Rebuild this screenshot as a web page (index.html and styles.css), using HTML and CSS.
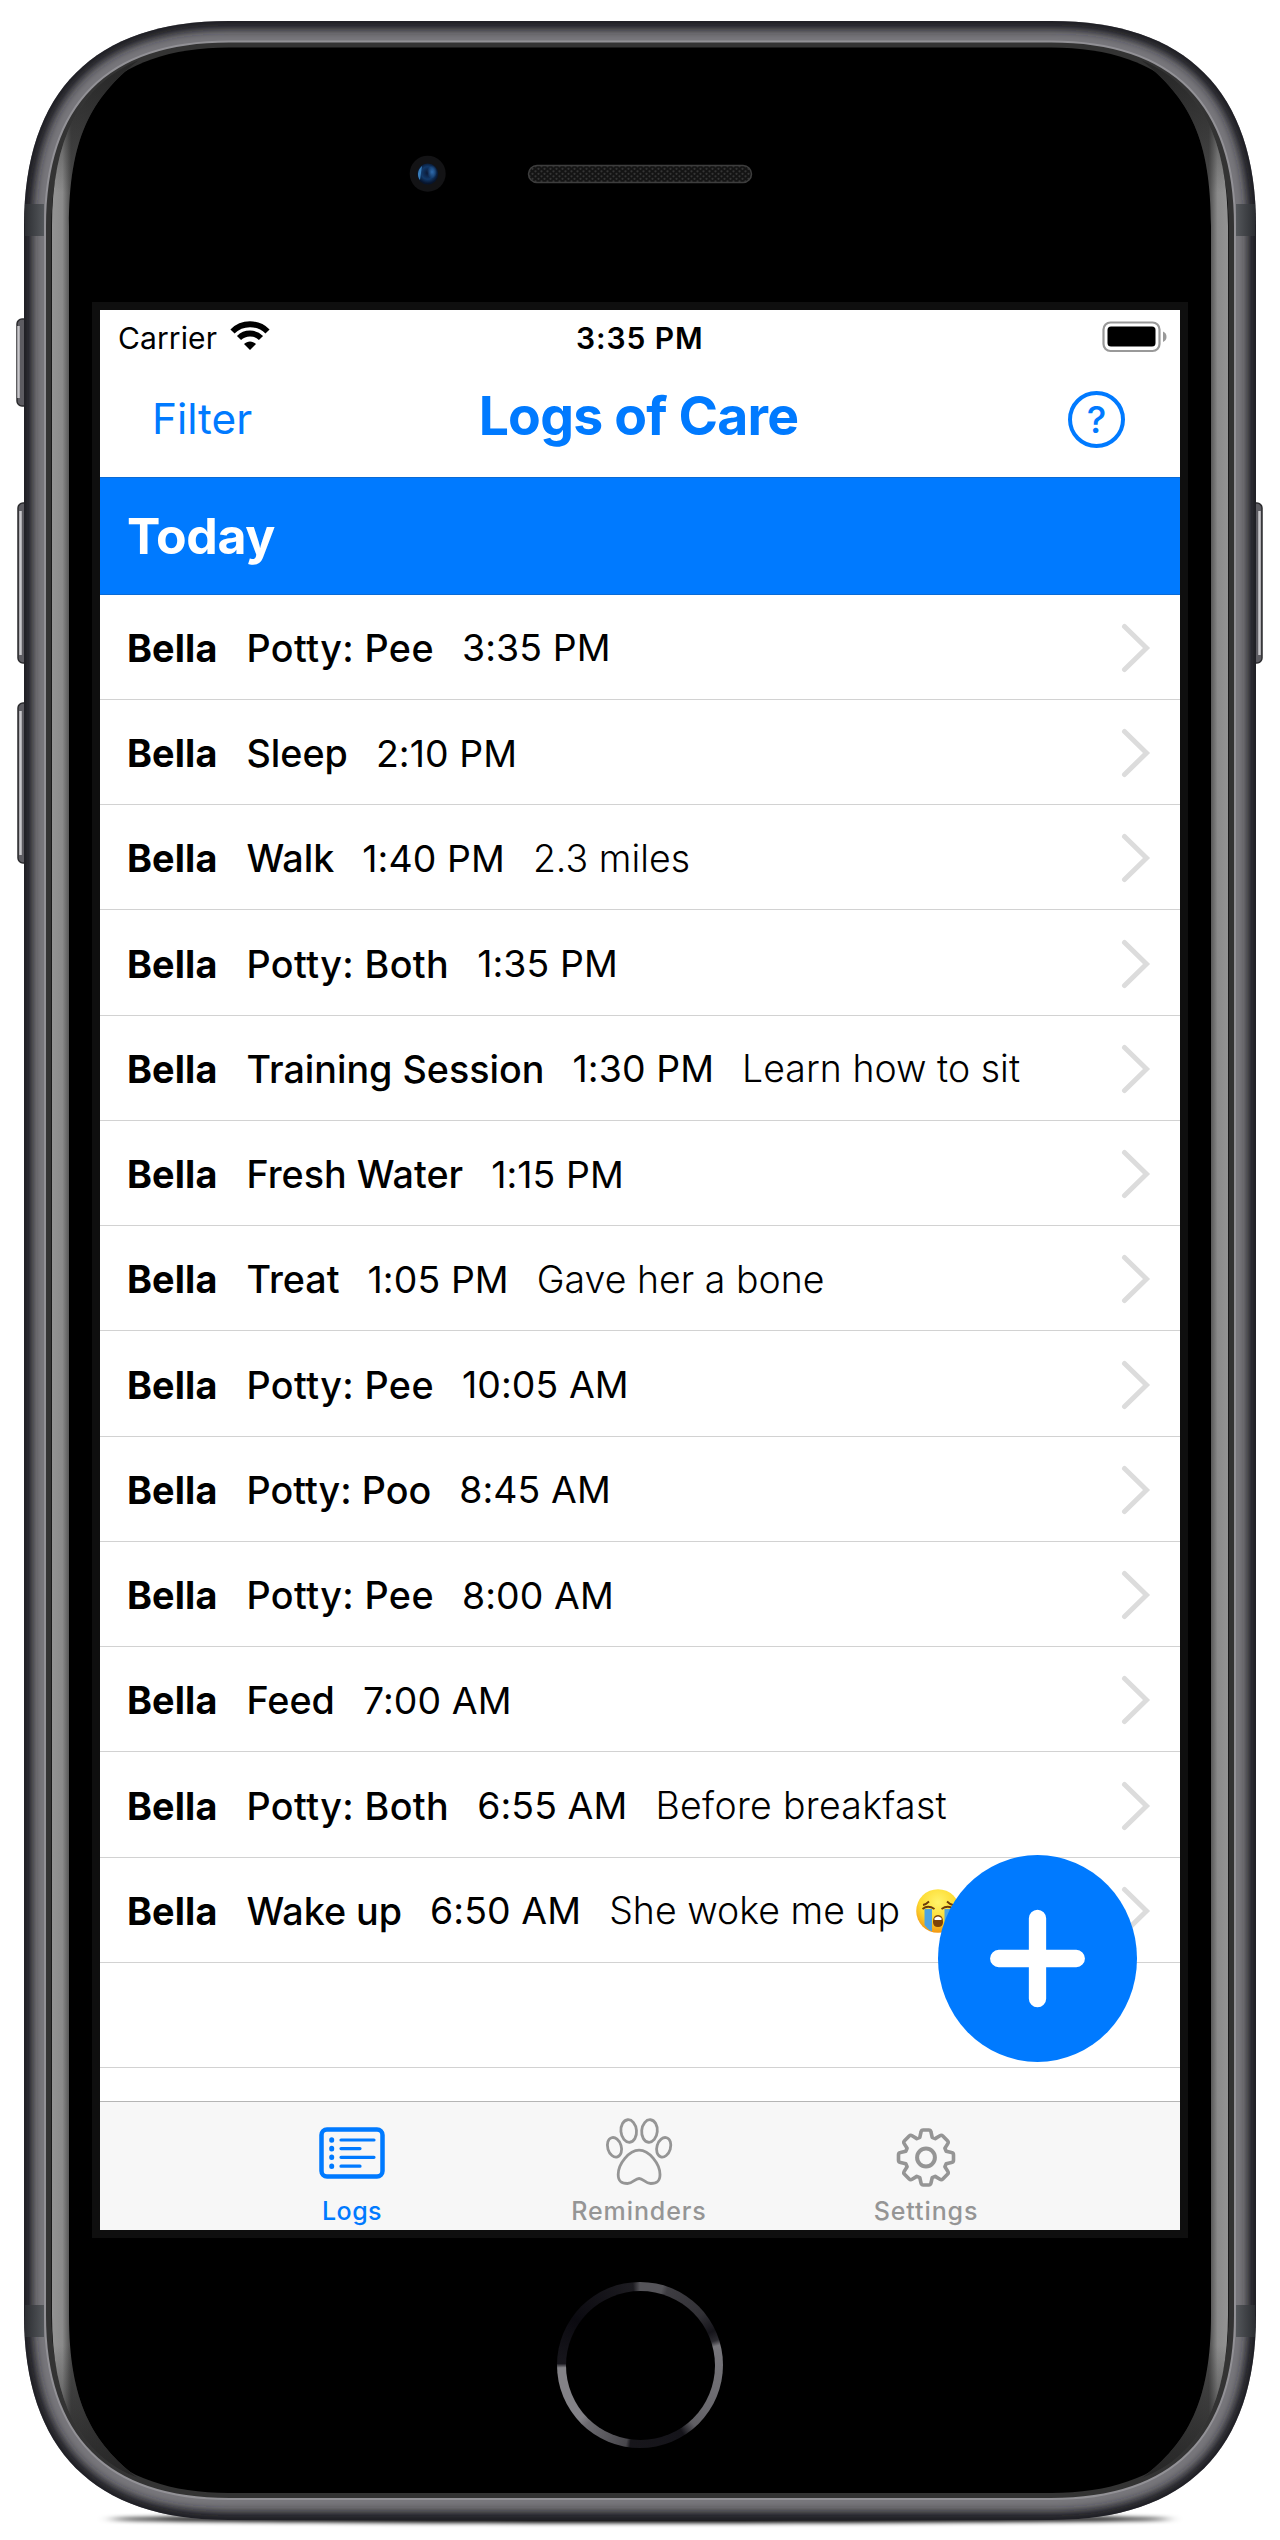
FILE: index.html
```html
<!DOCTYPE html>
<html lang="en">
<head>
<meta charset="utf-8">
<title>Logs of Care</title>
<link rel="stylesheet" href="styles.css">
</head>
<body>
<div class="device">
  <svg class="hardware" viewBox="0 0 1280 2540" aria-hidden="true">
    <defs>
      <path id="body" d="M24 226C24 91 94 21 229 21H1051C1186 21 1256 91 1256 226V2315C1256 2450 1186 2520 1051 2520H229C94 2520 24 2450 24 2315Z"/>
      <path id="glass" d="M45 226C45 104 107 41.500 229 41.500H1051C1173 41.500 1235 104 1235 226V2315C1235 2437 1173 2499 1051 2499H229C107 2499 45 2437 45 2315Z"/>
      <clipPath id="bodyClip"><use href="#body"/></clipPath>
      <filter id="soft" x="-5%" y="-5%" width="110%" height="110%"><feGaussianBlur stdDeviation="4.500"/></filter>
      <filter id="shade" x="-5%" y="-100%" width="110%" height="300%"><feGaussianBlur stdDeviation="7 2"/></filter>
      <linearGradient id="glow"><stop offset="0" stop-color="#939393"/><stop offset=".12" stop-color="#8a8a8a"/><stop offset=".22" stop-color="#494949"/><stop offset="1" stop-color="#3a3a3a"/></linearGradient>
      <linearGradient id="glowFade" x1="0" y1="0" x2="0" y2="1"><stop offset="0" stop-color="#222" stop-opacity=".85"/><stop offset=".055" stop-color="#222" stop-opacity="0"/><stop offset=".945" stop-color="#222" stop-opacity="0"/><stop offset="1" stop-color="#222" stop-opacity=".85"/></linearGradient>
      <linearGradient id="band"><stop offset="0" stop-color="#2c2e32"/><stop offset="1" stop-color="#54575b"/></linearGradient>
      <pattern id="mesh" width="6" height="5" patternUnits="userSpaceOnUse"><rect width="6" height="5" fill="#141414"/><circle cx="1.500" cy="1.300" r="1.100" fill="#353535"/><circle cx="4.500" cy="3.800" r="1.100" fill="#353535"/></pattern>
      <radialGradient id="lens" cx=".5" cy=".45"><stop offset="0" stop-color="#0b1733"/><stop offset=".6" stop-color="#123969"/><stop offset="1" stop-color="#07142c"/></radialGradient>
      <radialGradient id="glint"><stop offset="0" stop-color="#2f6cae"/><stop offset="1" stop-color="#2f6cae" stop-opacity="0"/></radialGradient>
      <g id="edge">
        <rect x="25" y="204" width="19" height="32" fill="url(#band)"/>
        <rect x="25" y="2305" width="19" height="32" fill="url(#band)"/>
        <path d="M52 226C52 140 80 84 139 60C90 98 69 140 69 226V2315C69 2401 92 2443 138 2478C80 2456 52 2401 52 2315Z" fill="url(#glow)"/>
        <path d="M52 226C52 140 80 84 139 60C90 98 69 140 69 226V2315C69 2401 92 2443 138 2478C80 2456 52 2401 52 2315Z" fill="url(#glowFade)"/>
      </g>
    </defs>
    <ellipse cx="640" cy="2519" rx="530" ry="4" fill="#000" filter="url(#shade)"/>
    <g class="keys">
      <rect x="17" y="319" width="14" height="87" rx="5"/><path d="M18.500 326V398"/>
      <rect x="18" y="503" width="14" height="160" rx="5"/><path d="M20.500 511V655"/>
      <rect x="18" y="703" width="14" height="160" rx="5"/><path d="M20.500 711V855"/>
      <rect x="1248" y="503" width="14" height="160" rx="5"/><path d="M1259.500 511V655"/>
    </g>
    <use href="#body" fill="#77767b"/>
    <g clip-path="url(#bodyClip)"><use href="#body" fill="none" stroke="#1f1f23" stroke-width="17" filter="url(#soft)"/></g>
    <use href="#glass" fill="#333" stroke="#929196" stroke-width="2"/>
    <path d="M51.500 226C51.500 111 112 47.500 229 47.500H1051C1168 47.500 1228.500 111 1228.500 226V2315C1228.500 2430 1168 2493 1051 2493H229C112 2493 51.500 2430 51.500 2315Z" fill="#000"/>
    <use href="#edge"/>
    <use href="#edge" transform="matrix(-1 0 0 1 1280 0)"/>
    <circle cx="427.700" cy="173.700" r="18" fill="#131315"/>
    <circle cx="427.700" cy="174" r="10.500" fill="url(#lens)"/>
    <path d="M422 166C417 170 417 177 420 180Z" fill="#397db9"/>
    <ellipse cx="432" cy="172" rx="5" ry="6.500" fill="url(#glint)"/>
    <rect x="528.500" y="165.500" width="223" height="17" rx="8.500" fill="url(#mesh)" stroke="#3d3d3d" stroke-width="1.500"/>
  </svg>

  <main class="screen">
    <div class="status">
      <span class="carrier">Carrier</span>
      <svg class="wifi" viewBox="0 0 40 30" aria-hidden="true"><path d="M2.500 10.500C12 .800 28 .800 37.500 10.500M9 17C15 11 25 11 31 17" fill="none" stroke="#000" stroke-width="5.800"/><path d="M20 29L14 23C17.500 19.500 22.500 19.500 26 23Z"/></svg>
      <span class="clock">3:35 PM</span>
      <svg class="battery" viewBox="0 0 66 32" aria-hidden="true"><rect x="1.500" y="1.500" width="56" height="28.500" rx="7" fill="none" stroke="#999" stroke-width="2.200"/><rect x="5.500" y="5.500" width="48" height="20" rx="3.500"/><path d="M61 10.500Q64.500 12 64.500 15.700T61 21Z" fill="#999"/></svg>
    </div>
    <header class="nav">
      <span class="filter">Filter</span>
      <h1>Logs of Care</h1>
      <span class="help">?</span>
    </header>
    <h2 class="day">Today</h2>
    <ul class="list">
      <li><b>Bella</b><span class="act potty">Potty: Pee</span><span class="time">3:35 PM</span><svg class="chev"><use href="#chevron"/></svg></li>
      <li><b>Bella</b><span class="act">Sleep</span><span class="time">2:10 PM</span><svg class="chev"><use href="#chevron"/></svg></li>
      <li><b>Bella</b><span class="act">Walk</span><span class="time">1:40 PM</span><span class="note">2.3 miles</span><svg class="chev"><use href="#chevron"/></svg></li>
      <li><b>Bella</b><span class="act potty">Potty: Both</span><span class="time">1:35 PM</span><svg class="chev"><use href="#chevron"/></svg></li>
      <li><b>Bella</b><span class="act">Training Session</span><span class="time">1:30 PM</span><span class="note">Learn how to sit</span><svg class="chev"><use href="#chevron"/></svg></li>
      <li><b>Bella</b><span class="act">Fresh Water</span><span class="time">1:15 PM</span><svg class="chev"><use href="#chevron"/></svg></li>
      <li><b>Bella</b><span class="act">Treat</span><span class="time">1:05 PM</span><span class="note">Gave her a bone</span><svg class="chev"><use href="#chevron"/></svg></li>
      <li><b>Bella</b><span class="act potty">Potty: Pee</span><span class="time">10:05 AM</span><svg class="chev"><use href="#chevron"/></svg></li>
      <li><b>Bella</b><span class="act">Potty: Poo</span><span class="time">8:45 AM</span><svg class="chev"><use href="#chevron"/></svg></li>
      <li><b>Bella</b><span class="act potty">Potty: Pee</span><span class="time">8:00 AM</span><svg class="chev"><use href="#chevron"/></svg></li>
      <li><b>Bella</b><span class="act">Feed</span><span class="time">7:00 AM</span><svg class="chev"><use href="#chevron"/></svg></li>
      <li><b>Bella</b><span class="act potty">Potty: Both</span><span class="time">6:55 AM</span><span class="note wide">Before breakfast</span><svg class="chev"><use href="#chevron"/></svg></li>
      <li><b>Bella</b><span class="act">Wake up</span><span class="time">6:50 AM</span><span class="note">She woke me up</span>
        <svg class="emoji" viewBox="0 0 44 44" aria-hidden="true"><defs><radialGradient id="face" cx=".5" cy=".3" r=".75"><stop offset="0" stop-color="#fff36b"/><stop offset=".55" stop-color="#fddb32"/><stop offset="1" stop-color="#ef8a0c"/></radialGradient></defs><circle cx="22" cy="22" r="21.800" fill="url(#face)"/><path d="M8.500 20H16V42.500Q11 40 8.500 36ZM28.500 20H36V36Q33 40 28.500 42.500Z" fill="#4ba3e3"/><path d="M6.500 20Q12 15.500 18.500 20M25.500 20Q32 15.500 37.500 20M7 16Q10 15.500 13 12.500M31 12.500Q34 15.500 37 16" fill="none" stroke="#6b3b0a" stroke-width="1.800"/><path d="M17 33Q17 26 22 26T27 33Q27 38 22 38T17 33Z" fill="#7c4309"/><path d="M18.500 29Q22 26 25.500 29V31H18.500Z" fill="#fff"/></svg>
        <svg class="chev"><use href="#chevron"/></svg></li>
      <li></li>
    </ul>
    <nav class="tabs">
      <div class="tab on">
        <svg viewBox="0 0 72 72" aria-hidden="true"><g fill="none" stroke="currentColor" stroke-linecap="round"><rect x="5.500" y="14.500" width="61" height="47" rx="5.500" stroke-width="4.500"/><path d="M25 25H58M25 33.600H44M25 42.300H58M25 51.200H44" stroke-width="3.200"/><path d="M15.700 24.700V25.300M15.700 33.300V33.900M15.700 42V42.600M15.700 50.900V51.500" stroke-width="5"/></g></svg>
        <span>Logs</span>
      </div>
      <div class="tab">
        <svg viewBox="0 0 72 72" aria-hidden="true"><g fill="none" stroke="currentColor" stroke-width="2.800"><ellipse cx="25.700" cy="16" rx="7.800" ry="11.300" transform="rotate(-5 25.700 16)"/><ellipse cx="46.500" cy="16" rx="7.800" ry="11.300" transform="rotate(5 46.500 16)"/><ellipse cx="11.500" cy="32.300" rx="6.800" ry="10" transform="rotate(-17 11.500 32.300)"/><ellipse cx="60.700" cy="32.300" rx="6.800" ry="10" transform="rotate(17 60.700 32.300)"/><path d="M36.100 35.200C26 35.200 15.200 49 15.200 59.500C15.200 67 19 68.500 24.500 68.500C30 68.500 32 63.500 36.100 63.500S42.200 68.500 47.700 68.500C53.200 68.500 57 67 57 59.500C57 49 46.200 35.200 36.100 35.200Z"/></g></svg>
        <span>Reminders</span>
      </div>
      <div class="tab">
        <svg viewBox="0 0 72 72" aria-hidden="true"><g fill="none" stroke="currentColor" stroke-width="3.600" stroke-linejoin="round" transform="translate(0 1)"><circle cx="36" cy="41.500" r="8.900" stroke-width="4"/><path d="M33.300 14H38.700Q40.600 14 41 16L42.200 21.300L45.200 22.600L49.900 19.700Q51.500 18.700 52.800 20L57.500 24.700Q58.800 26 57.800 27.600L54.900 32.300L56.200 35.300L61.500 36.500Q63.500 36.900 63.500 38.800V44.200Q63.500 46.100 61.500 46.500L56.200 47.700L54.900 50.700L57.800 55.400Q58.800 57 57.500 58.300L52.800 63Q51.500 64.300 49.900 63.300L45.200 60.400L42.200 61.700L41 67Q40.600 69 38.700 69H33.300Q31.400 69 31 67L29.800 61.700L26.800 60.400L22.100 63.300Q20.500 64.300 19.200 63L14.500 58.300Q13.200 57 14.200 55.400L17.100 50.700L15.800 47.700L10.500 46.500Q8.500 46.100 8.500 44.200V38.800Q8.500 36.900 10.500 36.500L15.800 35.300L17.100 32.300L14.200 27.600Q13.200 26 14.500 24.700L19.200 20Q20.500 18.700 22.100 19.700L26.800 22.600L29.800 21.300L31 16Q31.400 14 33.300 14Z"/></g></svg>
        <span>Settings</span>
      </div>
    </nav>
    <svg class="fab" viewBox="0 0 199 207" aria-label="Add"><ellipse cx="99.500" cy="103.500" rx="99.500" ry="103.500" fill="#007aff"/><path d="M60.700 103.500H138.300M99.500 63.300V143.700" stroke="#fff" stroke-width="17.300" stroke-linecap="round"/></svg>
  </main>
  <div class="home"></div>
  <svg class="defs"><symbol id="chevron" viewBox="0 0 30 50"><path d="M3.500 3.500L25.500 25L3.500 46.500" fill="none" stroke="#dcdcdc" stroke-width="5" stroke-linecap="round"/></symbol></svg>
</div>
</body>
</html>
```
FILE: styles.css
```css
* { box-sizing: border-box; }
body { margin: 0; background: #fff; font-family: Inter, "Liberation Sans", sans-serif; color: #000; }
.device { position: relative; width: 1280px; height: 2540px; padding-top: 310px; overflow: hidden; }
.hardware { position: absolute; inset: 0; width: 1280px; height: 2540px; }
.keys rect { fill: #5d5c62; stroke: #2b2b2e; stroke-width: 1.5; }
.keys path { stroke: #c8c7cb; stroke-width: 2.5; }
.defs { display: none; }

.screen { position: relative; display: flex; flex-direction: column; width: 1080px; height: 1920px; margin: 0 auto; background: #fff; border-radius: 0; box-shadow: 0 0 0 8px #0f0f0f; }
.status { display: flex; align-items: center; height: 55px; padding: 0 12.5px 0 18px; font-size: 30px; }
.carrier { width: 98px; white-space: nowrap; letter-spacing: .1px; }
.wifi { width: 40px; height: 30px; margin: -4px 0 0 14px; }
.clock { margin-left: 306px; font-weight: 600; letter-spacing: .9px; }
.battery { width: 66px; height: 32px; margin: -2px 0 0 auto; }

.nav { display: grid; grid-template-columns: 130px 1fr 130px; align-items: center; height: 112px; padding: 0 55px 3px 52px; color: #007aff; }
.filter { font-size: 42.3px; margin-top: -2px; }
h1 { margin: -8px 0 0; text-align: center; font-size: 53.5px; font-weight: 700; line-height: 1; letter-spacing: -.8px; white-space: nowrap; }
.help { display: grid; place-items: center; justify-self: end; width: 57px; height: 57px; border: 4px solid; border-radius: 50%; font-size: 37px; font-weight: 500; }

.day { height: 117.5px; margin: 0; padding-left: 27px; line-height: 117px; font-size: 50px; font-weight: 700; letter-spacing: -.4px; color: #fff; background: #007aff; border-top: 1px solid #0a6bd6; border-bottom: 1px solid #0a6bd6; }
.list { flex: 1; min-height: 0; overflow: hidden; margin: 0; padding: 0; list-style: none; }
li { display: flex; align-items: center; height: 105.25px; padding: 2.5px 29px 0 27px; border-bottom: 1.5px solid #d2d2d2; font-size: 37.4px; white-space: nowrap; }
b { width: 91.5px; font-weight: 700; font-size: 37.8px; letter-spacing: .1px; }
.act { margin-left: 28px; font-weight: 500; font-size: 37.7px; }
.potty { letter-spacing: .4px; }
.time { margin-left: 28px; letter-spacing: .1px; }
.note { margin-left: 28px; font-weight: 300; letter-spacing: .05px; }
.wide { letter-spacing: .35px; }
.chev { width: 30px; height: 50px; margin-left: auto; flex: none; }
.emoji { width: 44px; height: 44px; margin-left: 16px; }

.tabs { display: flex; justify-content: center; height: 129px; padding-right: 2px; background: #f7f7f7; border-top: 1.5px solid #b5b5b5; }
.tab { display: flex; flex-direction: column; align-items: center; width: 287px; padding-top: 13px; color: #959595; font-size: 25px; font-weight: 500; letter-spacing: .9px; }
.tab svg { width: 72px; height: 72px; }
.tab span { line-height: 30px; margin-top: 9px; }
.tab.on { color: #007aff; letter-spacing: .5px; }
.fab { position: absolute; left: 837.5px; top: 1545px; width: 199px; height: 207px; }

.home { position: relative; width: 166px; height: 166px; margin: 52px auto 0; border-radius: 50%; background: conic-gradient(#555459 0 16deg, #3e3d42 20deg, #323136 50deg, #15141a 65deg, #2b2a30 72deg, #77767b 76deg, #69686d 125deg, #5f5e63 138deg, #15141a 148deg, #17161b 187deg, #48474c 190deg, #6c6b70 222deg, #838287 228deg, #838287 268deg, #17161c 271deg, #0b0a10 305deg, #1d1c21 355deg, #555459 360deg); }
.home::after { content: ""; position: absolute; inset: 8.5px; border-radius: 50%; background: #000; }
```
